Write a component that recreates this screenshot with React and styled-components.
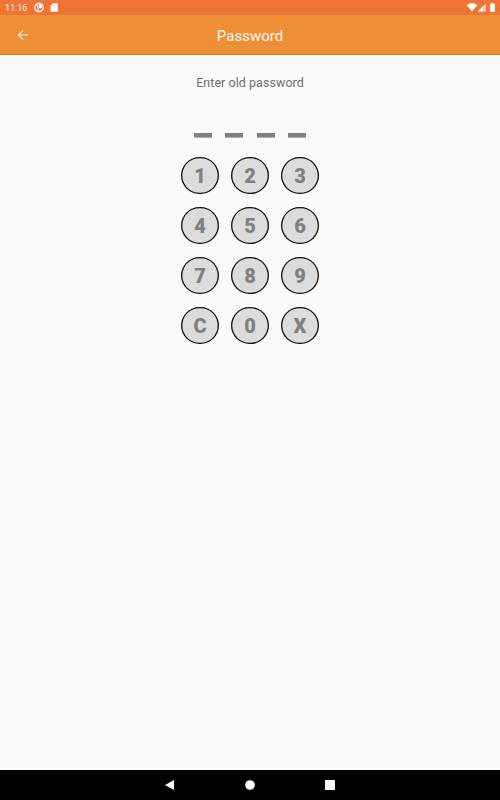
import styled, { createGlobalStyle } from "styled-components"

const GlobalStyle = createGlobalStyle`
    * {
        box-sizing: border-box;
    }
    body {
        margin: 0;
        font-family: Roboto, "Liberation Sans", sans-serif;
    }
`;

const Screen = styled.div`
    display: flex;
    flex-direction: column;
    width: 100%;
    height: 100vh;
    background: #fafafa;
    overflow: hidden;
`;

const StatusBar = styled.div`
    display: flex;
    align-items: center;
    justify-content: space-between;
    height: 15px;
    flex: none;
    padding: 0 4px 0 5px;
    background: #ef7536;
    color: #fdebe0;
`;

const StatusGroup = styled.div`
    display: flex;
    align-items: center;
    height: 15px;
`;

const Time = styled.span`
    width: 29px;
    font-size: 9px;
    line-height: 15px;
    padding-top: 1px;
`;

const Header = styled.header`
    display: grid;
    grid-template-columns: 45px 1fr 45px;
    align-items: center;
    height: 40px;
    flex: none;
    background: #ee8f38;
    border-bottom: 1px solid #e87d0c;
`;

const BackButton = styled.button`
    display: flex;
    justify-content: center;
    padding: 0;
    border: none;
    background: none;
`;

const Title = styled.h1`
    margin: 0;
    padding-top: 2px;
    color: #fff8f0;
    font-size: 15px;
    font-weight: 400;
    line-height: 20px;
    text-align: center;
`;

const Content = styled.main`
    display: flex;
    flex: 1;
    flex-direction: column;
    align-items: center;
    padding-top: 20px;
`;

const Hint = styled.p`
    margin: 0;
    color: #6f6f6f;
    font-size: 12.5px;
    line-height: 16px;
    letter-spacing: 0.05px;
`;

const Code = styled.div`
    display: flex;
    gap: 13.5px;
    margin-top: 42px;
`;

const Dash = styled.div`
    width: 17.8px;
    height: 5px;
    background: linear-gradient(#808080 4px, #b5b5b5 4px);
`;

const Keypad = styled.div`
    display: grid;
    grid-template-columns: repeat(3, 37.4px);
    gap: 12.6px;
    margin-top: 18.6px;
`;

const Key = styled.button`
    display: flex;
    align-items: center;
    justify-content: center;
    width: 37.4px;
    height: 37.4px;
    padding: 2px 0 0;
    border: none;
    border-radius: 50%;
    background: #dcdcdc;
    box-shadow: inset 0 0 0 1.3px #111;
    color: #808080;
    font-family: inherit;
    font-size: 20px;
    font-weight: 900;
    line-height: 22px;
`;

const NavBar = styled.nav`
    display: flex;
    align-items: center;
    justify-content: center;
    gap: 68px;
    height: 30px;
    flex: none;
    background: #000;
`;

const keys = ["1", "2", "3", "4", "5", "6", "7", "8", "9", "C", "0", "X"];

function StatusIcons() {
    return (
        <svg width="29" height="15" viewBox="0 0 29 15" fill="#fff">
            <path d="M0 5.200C2.900 2.600 7.200 2.600 10 5.200L5 11.600Z" />
            <path d="M19 3.300V11.600H10.800Z" fill="#f9c9b2" />
            <path d="M16.200 6.200V11.600H10.800Z" />
            <path d="M24.500 3.300V2.900H26.500V3.700H27.200Q28 3.700 28 4.400V11.200Q28 11.800 27.200 11.800H23.800Q23 11.800 23 11.200V4.400Q23 3.700 23.800 3.700H24.500Z" />
        </svg>
    )
}

function App() {
    return (
        <Screen>
            <GlobalStyle />
            <StatusBar>
                <StatusGroup>
                    <Time>11:16</Time>
                    <svg width="26" height="15" viewBox="0 0 26 15">
                        <circle cx="5" cy="7.500" r="4.200" fill="none" stroke="#fff" strokeWidth="1.200" />
                        <path d="M5 4H6.600Q8.300 4.300 8.300 6T6.600 8.300H5Z" fill="#fff" />
                        <path d="M2.200 5.500H3.900V11" fill="none" stroke="#fff" strokeWidth=".9" />
                        <path d="M19 3.300H23.200Q24 3.300 24 4.100V11Q24 11.800 23.200 11.800H17.300Q16.500 11.800 16.500 11V5.800Z" fill="#fff" />
                        <path d="M19.300 4.300V6M20.800 4.300V6M22.300 4.300V6" stroke="#f6b394" strokeWidth=".7" />
                    </svg>
                </StatusGroup>
                <StatusIcons />
            </StatusBar>
            <Header>
                <BackButton aria-label="Back">
                    <svg width="12" height="12" viewBox="0 0 12 12" fill="none" stroke="#fff3e4" strokeWidth="1.100">
                        <path d="M11.200 6H1.800M6 1.300L1.400 6L6 10.700" />
                    </svg>
                </BackButton>
                <Title>Password</Title>
            </Header>
            <Content>
                <Hint>Enter old password</Hint>
                <Code>
                    <Dash />
                    <Dash />
                    <Dash />
                    <Dash />
                </Code>
                <Keypad>
                    {keys.map((k) => (
                        <Key key={k}>{k}</Key>
                    ))}
                </Keypad>
            </Content>
            <NavBar>
                <svg width="12" height="12" viewBox="0 0 12 12" fill="#fff">
                    <path d="M10 .9V11.100L1 6Z" />
                </svg>
                <svg width="12" height="12" viewBox="0 0 12 12" fill="#fff">
                    <circle cx="6" cy="6" r="4.800" />
                </svg>
                <svg width="12" height="12" viewBox="0 0 12 12" fill="#fff">
                    <rect x="1" y="1" width="10" height="10" rx=".6" />
                </svg>
            </NavBar>
        </Screen>
    )
}

export default App;
